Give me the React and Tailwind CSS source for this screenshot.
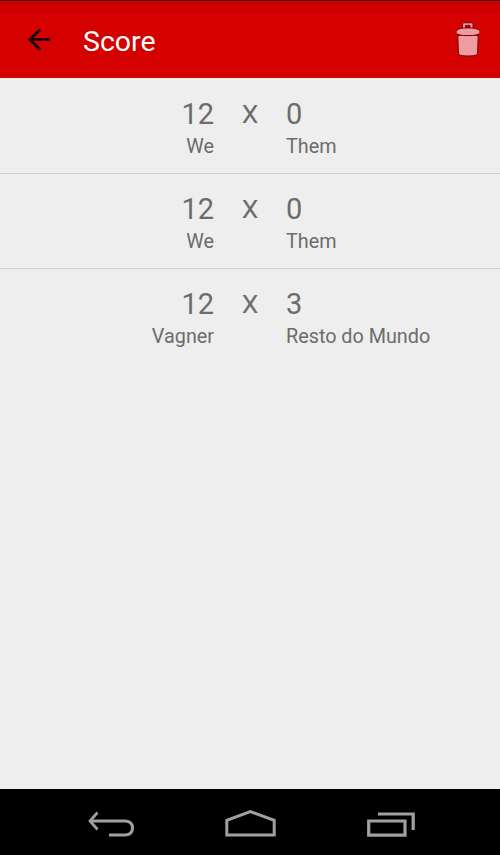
const games = [
  { a: "12", b: "0", left: "We", right: "Them" },
  { a: "12", b: "0", left: "We", right: "Them" },
  { a: "12", b: "3", left: "Vagner", right: "Resto do Mundo" },
];

function Game({ game, last }) {
  return (
    <div className={`grid h-[95px] shrink-0 grid-cols-[214px_72px_214px] content-start pt-[18px] text-[#6c6c6c] ${last ? "" : "border-b border-[#cfcfcf]"}`}>
      <div className="text-right text-[29px] leading-[34px]">{game.a}</div>
      <div className="text-center text-[26.5px] leading-[34px]">X</div>
      <div className="text-[29px] leading-[34px]">{game.b}</div>
      <div className="text-right text-[19.8px] leading-[32px]">{game.left}</div>
      <div />
      <div className="text-[19.8px] leading-[32px]">{game.right}</div>
    </div>
  );
}

function TrashIcon() {
  return (
    <svg className="-mt-[2px]" width="26" height="36" viewBox="0 0 26 36" fill="#ee9ca0" stroke="#7a0006" strokeWidth="1">
      <path d="M7.5 9V3.2Q7.5 1.8 8.8 1.8H16.7Q18 1.8 18 3.2V9Z" />
      <path d="M10.5 4.4H15V7.5H10.5Z" fill="#b5000a" />
      <path d="M2.8 14.5H23.2L22.6 32Q22.3 34.2 19 34.7Q13 35.3 7 34.7Q3.7 34.2 3.4 32Z" />
      <path d="M1 11C1 8.4 5 6.9 13 6.9S25 8.4 25 11S21 14.6 13 14.6S1 13.6 1 11Z" />
    </svg>
  );
}

export default function App() {
  return (
    <div className="flex h-[855px] w-[500px] flex-col overflow-hidden bg-[#eeeeee] font-[Roboto,sans-serif]">
      <header className="flex h-[78px] shrink-0 items-center border-t border-[#420000] bg-linear-to-b from-[#c80000] via-[#d50000] via-15% to-[#d50000] pl-[28px] pr-[19px]">
        <svg width="23" height="23" viewBox="0 0 23 23" fill="none" stroke="#100000" strokeWidth="2.6">
          <path d="M22.2 11.5H2M12 1.7L2 11.5L12 21.5" />
        </svg>
        <h1 className="ml-8 grow pt-[5px] text-[28.5px] leading-9 text-white">Score</h1>
        <TrashIcon />
      </header>
      <main className="flex grow flex-col pt-px">
        {games.map((g, i) => <Game key={i} game={g} last={i === games.length - 1} />)}
      </main>
      <footer className="flex h-[66px] shrink-0 items-start bg-black pl-[87px] pt-[19px]">
        <svg width="48" height="31" viewBox="0 0 48 31" fill="none" stroke="#a0a0a0" strokeWidth="3">
          <path d="M3 13H38.5Q45.5 13.5 45.5 20T38.5 27H22" />
          <path d="M10.5 4.5L3 13L10.5 21.5" strokeWidth="2.7" />
        </svg>
        <svg className="ml-[89px]" width="53" height="31" viewBox="0 0 53 31" fill="none" stroke="#a0a0a0" strokeWidth="3">
          <path d="M2.8 27V12.4L26.3 3.6L50.2 12.4V27Z" />
        </svg>
        <svg className="ml-[89px]" width="50" height="31" viewBox="0 0 50 31" fill="none" stroke="#a0a0a0" strokeWidth="3.2">
          <path d="M2.7 13H39V27.2H2.7ZM12 6H47.2V22" />
        </svg>
      </footer>
    </div>
  );
}
